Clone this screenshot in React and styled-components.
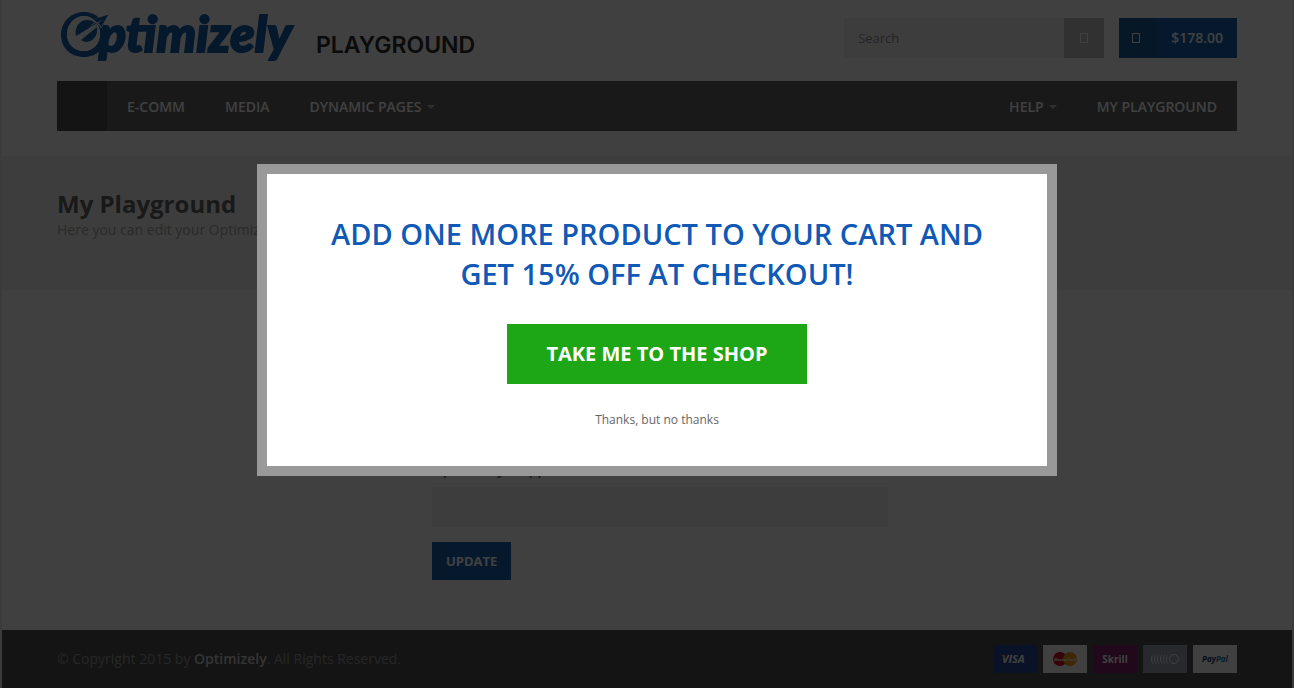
import React from 'react';
import styled, { createGlobalStyle } from 'styled-components';

const Global = createGlobalStyle`
  *, *::before, *::after { box-sizing: border-box; }
  html, body { margin: 0; }
  body {
    background: #ebebeb;
    color: #a6a6a6;
    font: 14px/20px "Open Sans", "Noto Sans", sans-serif;
  }
  h1, h2, p { margin: 0; }
  button, input { font-family: inherit; border: 0; border-radius: 0; margin: 0; }
  button { cursor: pointer; padding: 0; }
  a { color: inherit; text-decoration: none; }
`;

const Page = styled.div`
  min-height: 100vh;
  margin: 0 2px;
  background: #fff;
  display: flex;
  flex-direction: column;
`;

const Container = styled.div`
  width: 100%;
  max-width: 1180px;
  margin: 0 auto;
`;

const TopRow = styled(Container)`
  display: flex;
  justify-content: space-between;
  align-items: flex-start;
  height: 81px;
`;

const LogoLink = styled.a`
  display: block;
  height: 81px;
  svg { display: block; }
`;

const Tools = styled.div`
  display: flex;
  gap: 15px;
  padding-top: 18px;
`;

const SearchForm = styled.form`
  display: flex;
  height: 40px;
`;

const SearchInput = styled.input`
  width: 220px;
  padding: 0 14px;
  background: #f4f4f4;
  color: #909090;
  font-size: 13px;
  &::placeholder { color: #909090; opacity: 1; }
`;

const SearchButton = styled.button`
  width: 40px;
  background: #c4c4c4;
  color: #fff;
`;

const CartButton = styled.button`
  display: flex;
  height: 40px;
  background: #1a66b0;
  color: #fff;
  font-size: 14px;
  font-weight: 600;
  line-height: 40px;
`;

const CartIcon = styled.span`
  width: 36px;
  height: 40px;
  padding-right: 2px;
  background: #18609c;
`;

const CartTotal = styled.span`
  padding: 0 14px 0 16px;
`;

const Nav = styled.nav`
  display: flex;
  height: 50px;
  background: #646464;
  color: #fff;
`;

const HomeLink = styled.a`
  width: 50px;
  background: #505050;
`;

const NavLink = styled.a`
  display: flex;
  align-items: center;
  gap: 5px;
  padding: 2px 20px 0;
  margin-left: ${(p) => (p.$push ? 'auto' : '0')};
  color: #fff;
  font-size: 14px;
  font-weight: 600;
`;

const Caret = styled.span`
  border: 4px solid transparent;
  border-top-color: #c0c0c0;
  border-bottom: 0;
`;

const TitleBand = styled.section`
  height: 134px;
  margin-top: 25px;
  padding-top: 32px;
  background: #f4f4f4;
`;

const Title = styled.h1`
  color: #646464;
  font-size: 24px;
  line-height: 32px;
  font-weight: 700;
`;

const Main = styled.main`
  flex: 1;
  padding: 170px 0 50px;
`;

const SnippetForm = styled.form`
  display: flex;
  flex-direction: column;
  align-items: flex-start;
  max-width: 456px;
  margin-left: 375px;
`;

const Label = styled.label`
  margin-bottom: 7px;
  color: #646464;
  font-weight: 600;
`;

const TextInput = styled.input`
  width: 100%;
  height: 40px;
  margin-bottom: 15px;
  padding: 0 14px;
  background: #f4f4f4;
`;

const UpdateButton = styled.button`
  height: 38px;
  padding: 0 14px;
  background: #1a66b0;
  color: #fff;
  font-size: 13px;
  font-weight: 700;
`;

const Footer = styled.footer`
  background: #525252;
  color: #989898;
`;

const FooterRow = styled(Container)`
  display: flex;
  justify-content: space-between;
  align-items: center;
  height: 58px;
  strong { color: #d0d0d0; font-weight: 600; }
`;

const Cards = styled.div`
  display: flex;
  gap: 6px;
  svg { display: block; }
`;

const Backdrop = styled.div`
  position: fixed;
  inset: 0;
  background: rgba(0, 0, 0, 0.75);
`;

const Modal = styled.div`
  position: fixed;
  top: 50%;
  left: 50%;
  width: 800px;
  margin: -180px 0 0 -390px;
  padding: 40px 50px 36px;
  border: 10px solid #999;
  background: #fff;
  text-align: center;
`;

const Offer = styled.h2`
  color: #1059b5;
  font-size: 29px;
  line-height: 40px;
  font-weight: 600;
`;

const ShopButton = styled.button`
  display: block;
  width: 300px;
  height: 60px;
  margin: 30px auto 25px;
  padding-bottom: 2px;
  background: #1da615;
  color: #fff;
  font-size: 20px;
  font-weight: 700;
`;

const Dismiss = styled.button`
  background: none;
  color: #666;
  font-size: 12px;
  line-height: 20px;
`;

function Logo() {
  return (
    <svg width="440" height="72" viewBox="0 0 440 72" role="img" aria-label="Optimizely Playground">
      <g fill="#1461b0">
        <text x="42" y="52" fontFamily="Lato" fontSize="50" fontWeight="900" fontStyle="italic" stroke="#1461b0" strokeWidth="2">ptimizely</text>
        <path fillRule="evenodd" d="M27 12C14 12 4 22 4 35C4 48 14 57 27 57C40 57 49 48 49 35C49 22 40 12 27 12ZM27 16C36 16 43 24 43 34C43 44 36 51 27 51C17 51 10 44 10 34C10 24 18 16 27 16Z" />
        <path d="M27 16C36 16 43 24 43 34C43 44 36 51 27 51C17 51 10 44 10 34C10 24 18 16 27 16Z" fill="#fff" />
        <path d="M19 36C17 28 22 20 30 20C34 20 37 21 39 24Z" />
        <path d="M24 40L40 27C42 37 32 46 24 40Z" />
        <path d="M38 19L52 14L44 28L42 24L24 39L37 23L41 22Z" stroke="#fff" strokeWidth="1" />
        <path d="M37 19L51 15L44 27L43 23L40 22Z" />
        <path d="M18 38L46 19L29 35Z" fill="#fff" />
      </g>
      <text x="259" y="53" fill="#2c2c2c" fontFamily="Inter" fontSize="23" fontWeight="600">PLAYGROUND</text>
    </svg>
  );
}

function MissingGlyph({ color = '#fff' }) {
  return (
    <svg width="8" height="10" viewBox="0 0 8 10" aria-hidden="true">
      <rect x="0.5" y="0.5" width="7" height="9" fill="none" stroke={color} />
    </svg>
  );
}

function Card({ name, fill, children }) {
  return (
    <svg width="44" height="28" viewBox="0 0 44 28" role="img" aria-label={name}>
      <rect width="44" height="28" fill={fill} />
      {children}
    </svg>
  );
}

export default function App() {
  return (
    <>
      <Global />
      <Page>
        <header>
          <TopRow>
            <LogoLink href="#"><Logo /></LogoLink>
            <Tools>
              <SearchForm>
                <SearchInput type="search" aria-label="Search" placeholder="Search" />
                <SearchButton type="button" aria-label="Submit search"><MissingGlyph /></SearchButton>
              </SearchForm>
              <CartButton type="button">
                <CartIcon><MissingGlyph /></CartIcon>
                <CartTotal>$178.00</CartTotal>
              </CartButton>
            </Tools>
          </TopRow>
          <Container>
            <Nav>
              <HomeLink href="#" aria-label="Home" />
              <NavLink href="#">E-COMM</NavLink>
              <NavLink href="#">MEDIA</NavLink>
              <NavLink href="#">DYNAMIC PAGES<Caret /></NavLink>
              <NavLink href="#" $push>HELP<Caret /></NavLink>
              <NavLink href="#">MY PLAYGROUND</NavLink>
            </Nav>
          </Container>
        </header>
        <TitleBand>
          <Container>
            <Title>My Playground</Title>
            <p>Here you can edit your Optimizely snippet.</p>
          </Container>
        </TitleBand>
        <Main>
          <Container>
            <SnippetForm>
              <Label htmlFor="snippet">Optimizely Snippet</Label>
              <TextInput id="snippet" type="text" />
              <UpdateButton type="button">UPDATE</UpdateButton>
            </SnippetForm>
          </Container>
        </Main>
        <Footer>
          <FooterRow>
            <p>© Copyright 2015 by <strong>Optimizely</strong>. All Rights Reserved.</p>
            <Cards>
              <Card name="Visa" fill="#2a4a9a">
                <text x="9" y="18" fill="#fff" fontFamily="Open Sans" fontSize="11" fontWeight="700" fontStyle="italic">VISA</text>
                <path d="M8 10H11L13 14Z" fill="#e8a020" />
              </Card>
              <Card name="MasterCard" fill="#fff">
                <circle cx="17" cy="14" r="7" fill="#d80c18" />
                <circle cx="27" cy="14" r="7" fill="#f49a1c" />
                <text x="22" y="16" textAnchor="middle" fill="#fff" fontFamily="Open Sans" fontSize="4" fontWeight="700" fontStyle="italic">MasterCard</text>
              </Card>
              <Card name="Skrill" fill="#82206a">
                <text x="22" y="18" textAnchor="middle" fill="#fff" fontFamily="Open Sans" fontSize="10" fontWeight="700">Skrill</text>
              </Card>
              <Card name="Prepaid card" fill="#9fa2b4">
                <g fill="none" stroke="#fff">
                  <circle cx="31" cy="14" r="4.5" />
                  {[8, 11, 14, 17, 20, 23].map((x) => (
                    <path key={x} d={`M${x + 2} 9.5C${x} 12 ${x} 16 ${x + 2} 18.5`} />
                  ))}
                </g>
              </Card>
              <Card name="PayPal" fill="#fff">
                <text x="22" y="17" textAnchor="middle" fontFamily="Open Sans" fontSize="8" fontWeight="700" fontStyle="italic" fill="#1a3468">
                  Pay<tspan fill="#1f6fa8">Pal</tspan>
                </text>
              </Card>
            </Cards>
          </FooterRow>
        </Footer>
      </Page>
      <Backdrop />
      <Modal role="dialog" aria-modal="true" aria-labelledby="offer">
        <Offer id="offer">ADD ONE MORE PRODUCT TO YOUR CART AND GET 15% OFF AT CHECKOUT!</Offer>
        <ShopButton type="button">TAKE ME TO THE SHOP</ShopButton>
        <Dismiss type="button">Thanks, but no thanks</Dismiss>
      </Modal>
    </>
  );
}
